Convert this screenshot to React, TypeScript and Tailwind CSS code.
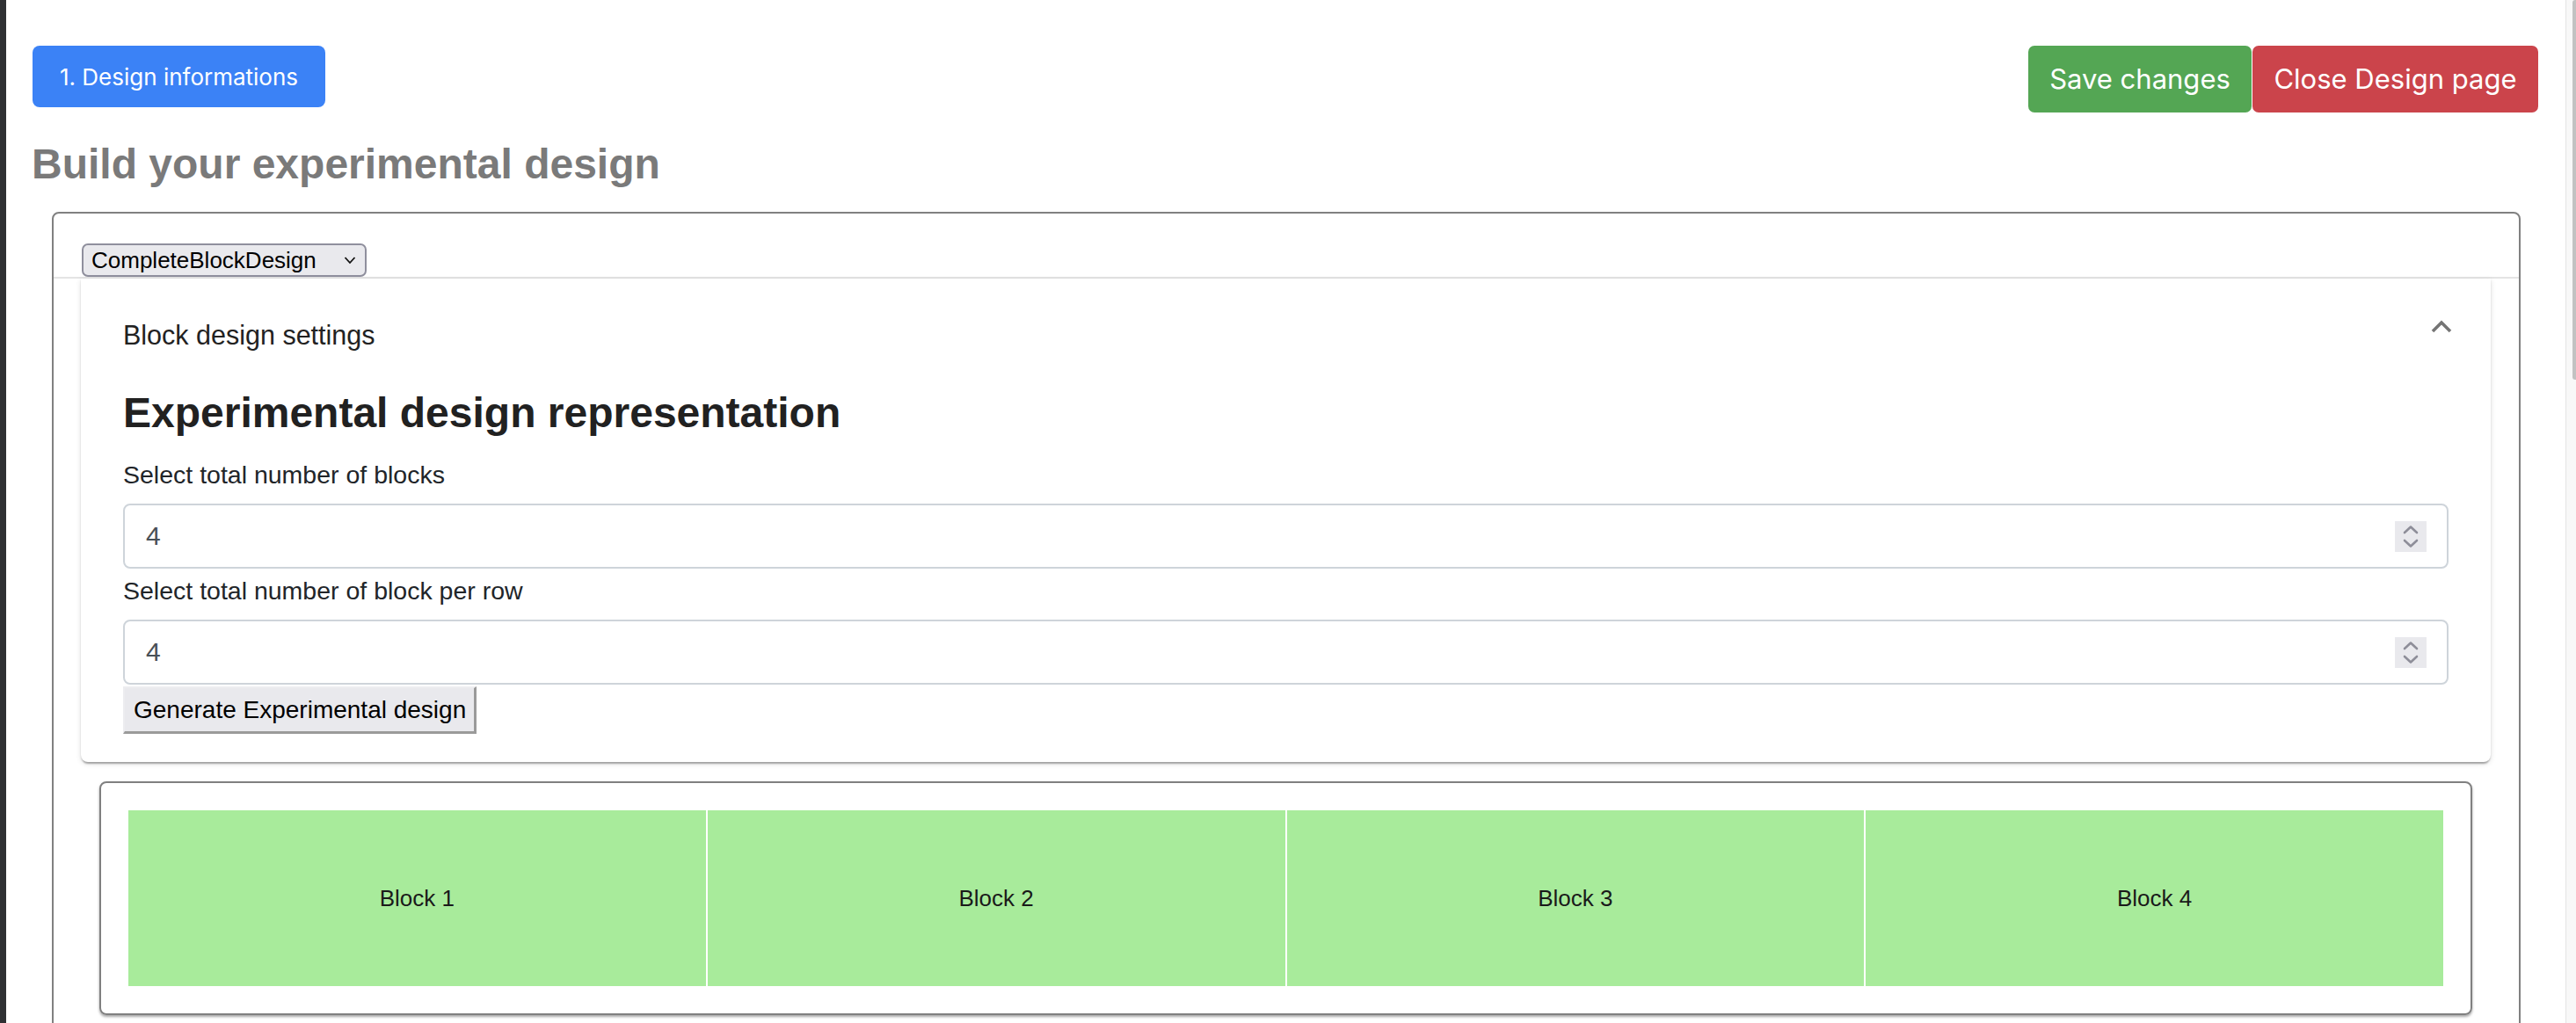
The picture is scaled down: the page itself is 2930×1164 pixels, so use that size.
import React from "react";

const sans = "font-['Liberation_Sans',Arial,sans-serif]";

function Spinner() {
  return (
    <div className="w-[36px] h-[35px] bg-[#e9e9ed] flex items-center justify-center">
      <svg width="36" height="35" viewBox="0 0 36 35" fill="none">
        <polyline points="11,13 18,6.5 25,13" stroke="#8e8e99" strokeWidth="2.6" strokeLinecap="round" strokeLinejoin="round" />
        <polyline points="11,22 18,28.5 25,22" stroke="#8e8e99" strokeWidth="2.6" strokeLinecap="round" strokeLinejoin="round" />
      </svg>
    </div>
  );
}

function NumberInput({ value }: { value: string }) {
  return (
    <div className="h-[74px] border-2 border-[#ced4da] rounded-[8px] bg-white flex items-center justify-between pl-[24px] pr-[23px]">
      <span className={`${sans} text-[30px] leading-[34px] text-[#495057]`}>{value}</span>
      <Spinner />
    </div>
  );
}

export default function App() {
  const blocks = ["Block 1", "Block 2", "Block 3", "Block 4"];
  return (
    <div className="w-[2930px] h-[1164px] overflow-hidden bg-white flex">
      <div className="w-[7px] h-full bg-[#2f3033] shrink-0" />
      <div className="flex-1 min-w-0 pl-[30px] pr-[31px] pt-[52px]">
        <div className="flex justify-between items-start">
          <div className="w-[333px] h-[70px] rounded-[8px] bg-[#3b82f6] text-white flex items-center justify-center font-['Inter',sans-serif] text-[26px]">
            1. Design informations
          </div>
          <div className="flex gap-[1px]">
            <div className="w-[254px] h-[76px] rounded-[7px] bg-[#54a654] text-white flex items-center justify-center font-['Inter',sans-serif] text-[31px]">
              Save changes
            </div>
            <div className="w-[325px] h-[76px] rounded-[7px] bg-[#cb444b] text-white flex items-center justify-center font-['Inter',sans-serif] text-[31px]">
              Close Design page
            </div>
          </div>
        </div>

        <h1 className={`${sans} mt-[30px] text-[48px] leading-[58px] font-bold text-[#7a7a7a] -ml-[1px]`}>
          Build your experimental design
        </h1>

        <div className="mt-[25px] ml-[22px] mr-[20px] border-2 border-[#808080] rounded-[8px] pb-[60px]">
          <div className="pt-[34px] pl-[32px] border-b-2 border-[#e4e4e4]">
            <div className="w-[324px] h-[38px] bg-[#e9e9ed] border-2 border-[#8f8f9d] rounded-[7px] flex items-center justify-between pl-[9px] pr-[10px]">
              <span className={`${sans} text-[26px] leading-[30px] text-black`}>CompleteBlockDesign</span>
              <svg width="14" height="10" viewBox="0 0 14 10" fill="none">
                <polyline points="1.5,2 7,8 12.5,2" stroke="#111" strokeWidth="1.8" />
              </svg>
            </div>
          </div>

          <div className="ml-[31px] mr-[32px] bg-white rounded-b-[8px] shadow-[0_4px_2px_-2px_rgba(0,0,0,0.2),0_2px_2px_0_rgba(0,0,0,0.14),0_2px_6px_0_rgba(0,0,0,0.12)] px-[48px] pt-[46px] pb-[32px]">
            <div className="flex justify-between items-start">
              <span className={`${sans} text-[30.5px] leading-[36px] text-[#222]`}>Block design settings</span>
              <svg width="24" height="15" viewBox="0 0 24 15" fill="none" className="mt-[1px] -mr-[4px]">
                <polyline points="2,13 12,3 22,13" stroke="#757575" strokeWidth="3.6" />
              </svg>
            </div>
            <h2 className={`${sans} mt-[42px] text-[48px] leading-[58px] font-bold text-[#212121]`}>
              Experimental design representation
            </h2>
            <div className={`${sans} mt-[25px] text-[28.5px] leading-[32px] text-[#212529]`}>Select total number of blocks</div>
            <div className="mt-[17px]">
              <NumberInput value="4" />
            </div>
            <div className={`${sans} mt-[9px] text-[28.5px] leading-[32px] text-[#212529]`}>Select total number of block per row</div>
            <div className="mt-[17px]">
              <NumberInput value="4" />
            </div>
            <div className="mt-[2px] w-[402px] h-[54px] bg-[#e9e9ed] border-t-2 border-l-2 border-r-[3px] border-b-[3px] border-t-[#ededf0] border-l-[#ededf0] border-r-[#9a9a9a] border-b-[#9a9a9a] flex items-center pl-[10px]">
              <span className={`${sans} text-[28px] leading-[32px] text-black`}>Generate Experimental design</span>
            </div>
          </div>

          <div className="mt-[22px] ml-[52px] mr-[53px] border-2 border-[#808080] rounded-[8px] p-[31px] shadow-[0_2px_3px_rgba(0,0,0,0.35)]">
            <div className="flex gap-[2px] h-[200px]">
              {blocks.map((b) => (
                <div key={b} className="flex-1 bg-[#a8eb9b] flex items-center justify-center">
                  <span className={`${sans} text-[26px] leading-[30px] text-[#1a1a1a]`}>{b}</span>
                </div>
              ))}
            </div>
          </div>
        </div>
      </div>
      <div className="w-[12px] h-full bg-[#f8f8f8] border-l border-[#e4e4e4] shrink-0 flex justify-end">
        <div className="w-[4px] h-[432px] bg-[#c2c2c2] rounded-l-[3px]" />
      </div>
    </div>
  );
}
